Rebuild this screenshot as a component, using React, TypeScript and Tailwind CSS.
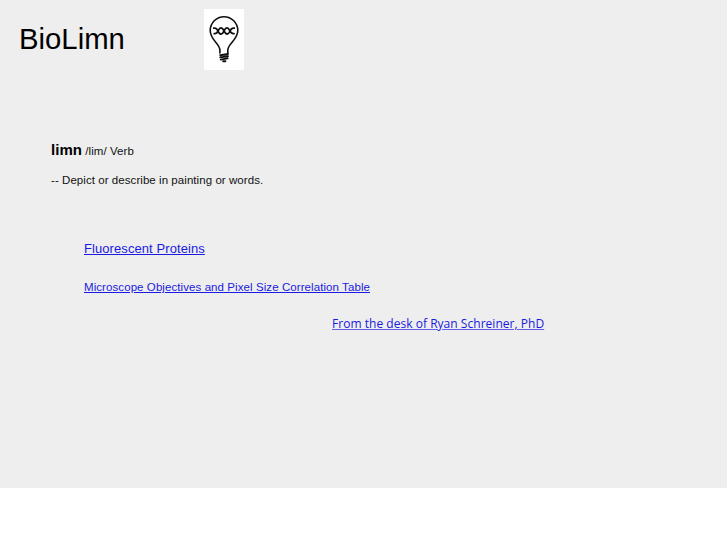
function BulbLogo() {
  return (
    <svg viewBox="0 0 40 61" className="h-[61px] w-[40px]" fill="none" stroke="#111" strokeLinecap="round">
      {/* glass */}
      <path
        d="M15.9 44 V41 C15.7 34.5 6.2 31 6.2 21.5 A13.8 13.8 0 0 1 33.8 21.5 C33.8 31 24 34.5 23.8 41 V44"
        strokeWidth="1.6"
      />
      {/* helix */}
      <path d="M9.8 19.2 C14.8 18 13.2 25 16.8 25 C20.3 25 19.8 18.8 23 18.8 C26.2 18.8 25.2 25.5 30 24.6" strokeWidth="1.8" />
      <path d="M10.2 24.6 C14.5 25.5 13.8 18.8 17 18.8 C20.3 18.8 19.8 25 23.2 25 C26.6 25 25.2 18 30.2 19.2" strokeWidth="1.8" />
      {/* screw base */}
      <path d="M16.2 46.2 L24 45 M16.2 48.4 L24 47.2 M16.8 50.6 L23.6 49.4" strokeWidth="1.9" />
      <path d="M19.2 52.2 H21.4" strokeWidth="2" />
    </svg>
  );
}

export default function App() {
  return (
    <div className="min-h-[545px] bg-white font-['Liberation_Sans',Arial,sans-serif] text-[#111]">
      <main className="flex h-[488px] flex-col items-start overflow-hidden bg-[#eeeeee]">
        <header className="flex h-[70px] items-start pt-[9px] pl-[19px]">
          <h1 className="w-[185px] pt-[13px] text-[29.3px] leading-[34px] whitespace-nowrap text-black">BioLimn</h1>
          <div className="bg-white">
            <BulbLogo />
          </div>
        </header>

        <section className="pt-[70px] pl-[51px] text-[11.5px] tracking-[0.06px] whitespace-nowrap">
          <p className="leading-[20px]">
            <strong className="text-[15px] font-bold text-black">limn</strong> /lim/ Verb
          </p>
          <p className="pt-[9px] leading-[20px]">-- Depict or describe in painting or words.</p>
        </section>

        <nav className="flex flex-col items-start pt-[49px] pl-[84px] whitespace-nowrap text-[#1a1ae0]">
          <a href="#proteins" className="text-[13px] leading-[20px] tracking-[0.08px] underline">
            Fluorescent Proteins
          </a>
          <a href="#objectives" className="mt-[18px] text-[11.5px] leading-[20px] tracking-[0.08px] underline">
            Microscope Objectives and Pixel Size Correlation Table
          </a>
          <a
            href="#desk"
            className="mt-[17px] ml-[248px] font-['Open_Sans','Noto_Sans',sans-serif] text-[12px] leading-[20px] tracking-[0.03px] underline decoration-[#6060ea]"
          >
            From the desk of Ryan Schreiner, PhD
          </a>
        </nav>
      </main>
    </div>
  );
}
